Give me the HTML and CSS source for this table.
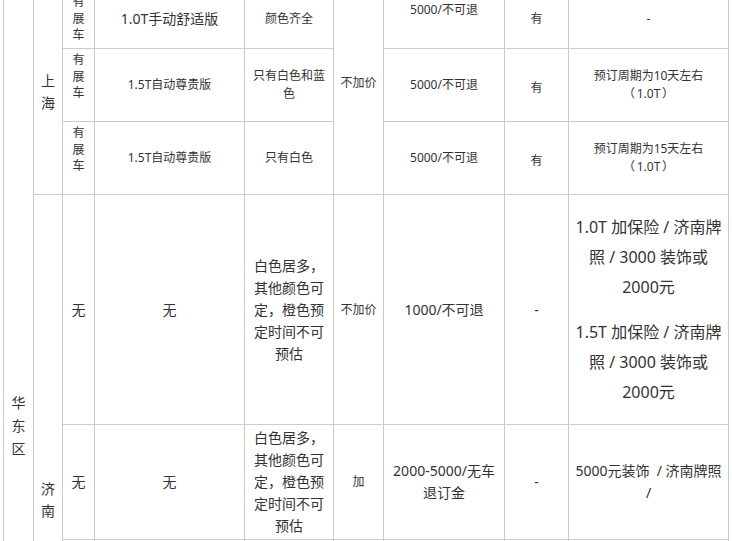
FILE: index.html
```html
<!DOCTYPE html>
<html lang="zh-CN">
<head>
<meta charset="utf-8">
<title>车型订购信息</title>
<link rel="stylesheet" href="styles.css">
</head>
<body>
<table class="grid">
  <tr class="r1">
    <td class="c1 region" rowspan="6">华<br>东<br>区</td>
    <td class="c2 city" rowspan="3">上<br>海</td>
    <td class="c3 stock">有<br>展<br>车</td>
    <td class="c4 t14">1.0T手动舒适版</td>
    <td class="c5">颜色齐全</td>
    <td class="c6 extra" rowspan="3">不加价</td>
    <td class="c7 extra">5000/不可退</td>
    <td class="c8">有</td>
    <td class="c9">-</td>
  </tr>
  <tr class="r2">
    <td class="stock extra2">有<br>展<br>车</td>
    <td>1.5T自动尊贵版</td>
    <td>只有白色和蓝<br>色</td>
    <td>5000/不可退</td>
    <td class="low">有</td>
    <td>预订周期为10天左右<br><span class="po">（</span>1.0T<span class="pc">）</span></td>
  </tr>
  <tr class="r3">
    <td class="stock extra2">有<br>展<br>车</td>
    <td>1.5T自动尊贵版</td>
    <td>只有白色</td>
    <td>5000/不可退</td>
    <td class="low">有</td>
    <td>预订周期为15天左右<br><span class="po">（</span>1.0T<span class="pc">）</span></td>
  </tr>
  <tr class="r4">
    <td class="city" rowspan="3">济<br>南</td>
    <td class="t14">无</td>
    <td class="t14">无</td>
    <td class="t14">白色居多，<br>其他颜色可<br>定，橙色预<br>定时间不可<br>预估</td>
    <td>不加价</td>
    <td class="t14">1000/不可退</td>
    <td class="t14">-</td>
    <td class="t16">
      <p class="para">1.0T 加保险 / 济南牌<br>照 / 3000 装饰或<br>2000元</p>
      <p class="para">1.5T 加保险 / 济南牌<br>照 / 3000 装饰或<br>2000元</p>
    </td>
  </tr>
  <tr class="r5">
    <td class="t14">无</td>
    <td class="t14">无</td>
    <td class="t14">白色居多，<br>其他颜色可<br>定，橙色预<br>定时间不可<br>预估</td>
    <td>加</td>
    <td class="t14">2000-5000/无车<br>退订金</td>
    <td class="t14">-</td>
    <td class="t14">5000元装饰 &nbsp;/ 济南牌照<br>/</td>
  </tr>
  <tr class="r6">
    <td></td>
    <td></td>
    <td></td>
    <td></td>
    <td></td>
    <td></td>
    <td></td>
  </tr>
</table>
</body>
</html>
```

FILE: styles.css
```css
html, body {
  margin: 0;
  padding: 0;
  background: #fff;
}

body {
  height: 541px;
  overflow: hidden;
  font-family: "Noto Sans", "Noto Sans CJK SC", sans-serif;
  color: #333;
}

.grid {
  border-collapse: separate;
  border-spacing: 0;
  table-layout: fixed;
  width: 726px;
  margin: -11px 0 0 3px;
  border-top: 1px solid #ccc;
  border-left: 1px solid #ccc;
}

.grid td {
  box-sizing: border-box;
  border-right: 1px solid #ccc;
  border-bottom: 1px solid #ccc;
  padding: 0 2px;
  text-align: center;
  vertical-align: middle;
  font-size: 12px;
  line-height: 18px;
}

.c1 { width: 30px; }
.c2 { width: 29px; }
.c3 { width: 32px; }
.c4 { width: 150px; }
.c5 { width: 89px; }
.c6 { width: 50px; }
.c7 { width: 121px; }
.c8 { width: 64px; }
.c9 { width: 160px; }

.r1 { height: 59px; }
.r2 { height: 73px; }
.r3 { height: 73px; }
.r4 { height: 230px; }
.r5 { height: 115px; }
.r6 { height: 265px; }

.grid td.region {
  vertical-align: top;
  padding-top: 401px;
  font-size: 14px;
  line-height: 23px;
}

.grid td.city {
  font-size: 14px;
  line-height: 22px;
}

.grid td.stock {
  line-height: 16.5px;
}

.grid td.extra {
  padding-bottom: 18px;
}

.grid td.extra2 {
  padding-bottom: 16.5px;
}

.grid td.low {
  padding-top: 5px;
}

.grid td.t14 {
  font-size: 14px;
  line-height: 22px;
}

.grid td.t16 {
  font-size: 16px;
  line-height: 30px;
  white-space: nowrap;
}

.po,
.pc {
  display: inline-block;
  width: 1em;
}

.po {
  text-align: right;
  padding-right: 0.15em;
}

.pc {
  text-align: left;
  padding-left: 0.15em;
}

.para {
  margin: 0;
}

.para + .para {
  margin-top: 15px;
}
```
